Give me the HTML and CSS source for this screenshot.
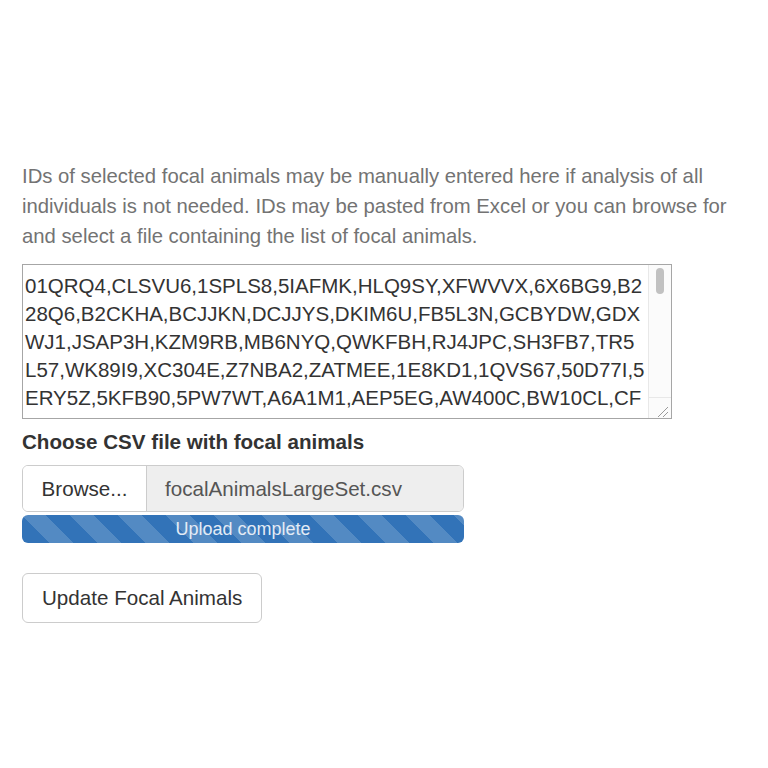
FILE: index.html
```html
<!DOCTYPE html>
<html>
<head>
<meta charset="utf-8">
<link rel="stylesheet" href="styles.css">
</head>
<body>
<div class="panel">
  <p class="help">IDs of selected focal animals may be manually entered here if analysis of all individuals is not needed. IDs may be pasted from Excel or you can browse for and select a file containing the list of focal animals.</p>
  <div class="ids-wrap">
    <textarea class="ids">01QRQ4,CLSVU6,1SPLS8,5IAFMK,HLQ9SY,XFWVVX,6X6BG9,B2
28Q6,B2CKHA,BCJJKN,DCJJYS,DKIM6U,FB5L3N,GCBYDW,GDX
WJ1,JSAP3H,KZM9RB,MB6NYQ,QWKFBH,RJ4JPC,SH3FB7,TR5
L57,WK89I9,XC304E,Z7NBA2,ZATMEE,1E8KD1,1QVS67,50D77I,5
ERY5Z,5KFB90,5PW7WT,A6A1M1,AEP5EG,AW400C,BW10CL,CF
2X7Q,CK8S7A,D4AEG9,DB0T5N,E3QM6V,EF7C0R,FJ2K8P,FX5D1W,G0ML4B,GH7V9S,HB2N5C,HU9X3E,J4RP7K,JD1W6T,K8GB2Z,KQ5N0M,L3CV8D,LM6X1A,M9TF4H,MR2J7Y,N0PE5Q,NX8K3S,P5DW1G,PH4Z9B,Q2LA6C,QT7M0R,R9BX4N,RE3V8J,S6KD2P,SW1H5F,T4ZQ9A,TG8C3L,U0MW7E,UR5B2K,V7NJ4X,VD3P8S,W2FY6M,WQ9A1T,X5HL0G,XK3R8C,Y8VE4N,YB2T6Q,Z1MJ9D,ZS6W3P</textarea>
    <div class="scroll-track"><div class="scroll-thumb"></div></div>
    <div class="scroll-corner">
      <svg class="grip" width="22" height="21" viewBox="0 0 22 21">
        <line x1="19" y1="10" x2="9" y2="20" stroke="#9a9a9a" stroke-width="1"/>
        <line x1="19" y1="15" x2="14" y2="20" stroke="#9a9a9a" stroke-width="1"/>
      </svg>
    </div>
  </div>
  <label class="file-label">Choose CSV file with focal animals</label>
  <div class="file-group">
    <span class="browse">Browse...</span>
    <span class="filename">focalAnimalsLargeSet.csv</span>
  </div>
  <div class="progress"><span class="progress-text">Upload complete</span></div>
  <button class="btn" type="button">Update Focal Animals</button>
</div>
</body>
</html>
```
FILE: styles.css
```css
html, body {
  margin: 0;
  padding: 0;
  background: #ffffff;
}

body {
  font-family: "Liberation Sans", Arial, sans-serif;
  color: #333333;
}

.panel {
  display: flex;
  flex-direction: column;
  align-items: flex-start;
  padding: 161px 22px 0 22px;
}

.help {
  margin: 0;
  font-size: 20.3px;
  line-height: 30px;
  color: #737373;
  width: 724px;
}

.ids-wrap {
  position: relative;
  margin-top: 13px;
  width: 650px;
  height: 155px;
}

.ids {
  display: block;
  box-sizing: border-box;
  width: 650px;
  height: 155px;
  margin: 0;
  padding: 7px 20px 0 2px;
  border: 1px solid #a6a6a6;
  border-radius: 0;
  font-family: "Liberation Sans", Arial, sans-serif;
  font-size: 20.5px;
  line-height: 28px;
  color: #333333;
  resize: none;
  outline: none;
  overflow: hidden;
}

.scroll-track {
  position: absolute;
  top: 1px;
  right: 1px;
  width: 23px;
  height: 132px;
  box-sizing: border-box;
  background: #fbfbfb;
  border-left: 1px solid #e8e8e8;
}

.scroll-thumb {
  position: absolute;
  top: 3px;
  left: 7px;
  width: 8px;
  height: 26px;
  border-radius: 4px;
  background: #c1c1c1;
}

.scroll-corner {
  position: absolute;
  bottom: 1px;
  right: 1px;
  width: 23px;
  height: 21px;
  box-sizing: border-box;
  background: #fbfbfb;
  border-left: 1px solid #e8e8e8;
  border-top: 1px solid #e8e8e8;
}

.grip {
  display: block;
  position: absolute;
  top: -1px;
  left: 0;
}

.file-label {
  margin-top: 12px;
  font-size: 20.6px;
  font-weight: bold;
  line-height: 22px;
  color: #333333;
}

.file-group {
  display: flex;
  margin-top: 12px;
  width: 442px;
  height: 47px;
  box-sizing: border-box;
  border: 1px solid #cccccc;
  border-radius: 6px;
  overflow: hidden;
  font-size: 20.6px;
}

.browse {
  display: flex;
  align-items: center;
  justify-content: center;
  width: 123px;
  background: #ffffff;
  color: #333333;
  border-right: 1px solid #cccccc;
}

.filename {
  display: flex;
  align-items: center;
  flex: 1;
  padding-left: 18px;
  background: #eeeeee;
  color: #555555;
}

.progress {
  display: flex;
  align-items: center;
  justify-content: center;
  margin-top: 3px;
  width: 442px;
  height: 28px;
  border-radius: 6px;
  background-color: #3273b8;
  background-image: linear-gradient(45deg, rgba(255,255,255,0.16) 25%, transparent 25%, transparent 50%, rgba(255,255,255,0.16) 50%, rgba(255,255,255,0.16) 75%, transparent 75%, transparent);
  background-size: 48px 48px;
}

.progress-text {
  font-size: 18px;
  color: #e3ebf5;
}

.btn {
  margin-top: 30px;
  box-sizing: border-box;
  height: 50px;
  padding: 0 19px;
  background: #ffffff;
  border: 1px solid #cccccc;
  border-radius: 6px;
  font-family: "Liberation Sans", Arial, sans-serif;
  font-size: 20.6px;
  color: #333333;
}
```
